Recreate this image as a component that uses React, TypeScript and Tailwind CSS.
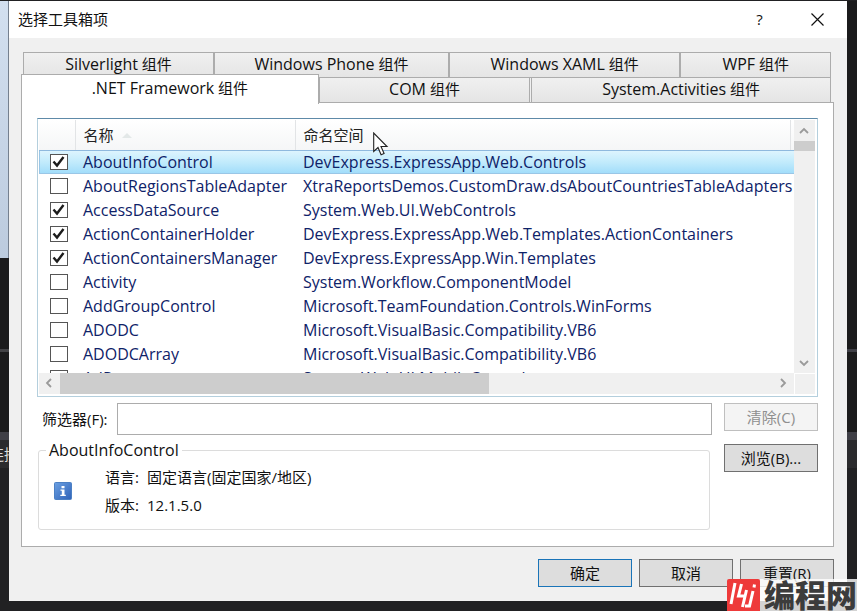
import React from "react";

const rows: [boolean, string, string][] = [
  [true, "AboutInfoControl", "DevExpress.ExpressApp.Web.Controls"],
  [false, "AboutRegionsTableAdapter", "XtraReportsDemos.CustomDraw.dsAboutCountriesTableAdapters"],
  [true, "AccessDataSource", "System.Web.UI.WebControls"],
  [true, "ActionContainerHolder", "DevExpress.ExpressApp.Web.Templates.ActionContainers"],
  [true, "ActionContainersManager", "DevExpress.ExpressApp.Win.Templates"],
  [false, "Activity", "System.Workflow.ComponentModel"],
  [false, "AddGroupControl", "Microsoft.TeamFoundation.Controls.WinForms"],
  [false, "ADODC", "Microsoft.VisualBasic.Compatibility.VB6"],
  [false, "ADODCArray", "Microsoft.VisualBasic.Compatibility.VB6"],
  [false, "AdRotator", "System.Web.UI.MobileControls"],
];

const tabBase =
  "border border-[#acacac] bg-linear-to-b from-[#f0f0f0] to-[#e5e5e5] pb-[2px] text-center leading-[22px] whitespace-nowrap";
const buttonBase = "w-[94px] shrink-0 border text-center leading-[26px]";

function TabLabel({ children }: { children: string }) {
  return (
    <>
      <span className="text-[16px]">{children}</span> 组件
    </>
  );
}

function Chevron({ d }: { d: string }) {
  return (
    <svg width="10" height="10" viewBox="0 0 10 10" fill="none" stroke="#9a9a9a" strokeWidth="1.8">
      <path d={d} />
    </svg>
  );
}

function Row({ checked, name, space, selected }: { checked: boolean; name: string; space: string; selected: boolean }) {
  return (
    <tr
      className={
        selected
          ? "h-6 bg-linear-to-b from-[#e0f5fe] via-[#c2ebfc] to-[#9fdcfa] shadow-[inset_0_1px_0_#8fb9de,inset_1px_0_0_#9ac6e6,inset_0_-1px_0_#9ac6e6]"
          : "h-6"
      }
    >
      <td className="p-0 pl-[11px]">
        <span className="relative block h-4 w-[18px]">
          <input
            type="checkbox"
            defaultChecked={checked}
            aria-label={name}
            className="peer block h-4 w-[18px] appearance-none border border-[#555] bg-white"
          />
          <svg
            className="pointer-events-none absolute inset-0 hidden peer-checked:block"
            width="18"
            height="16"
            viewBox="0 0 18 16"
            fill="none"
            stroke="#1c1c1c"
            strokeWidth="2.4"
          >
            <path d="M3.500 7.500 7 11.500 13.500 3" />
          </svg>
        </span>
      </td>
      <td className="p-0 pl-2">{name}</td>
      <td className="p-0 pl-2" colSpan={2}>{space}</td>
    </tr>
  );
}

export default function App() {
  return (
    <div className="relative flex min-h-screen bg-[#212123] pt-px font-['Open_Sans','Noto_Sans_CJK_SC',sans-serif] text-[15px] leading-6 text-[#111]">
      <aside className="flex w-[9px] shrink-0 flex-col overflow-hidden">
        <div className="h-[257px] border-r border-[#75808f] bg-linear-to-b from-[#d3e0f0] to-[#bccbde]" />
        <div className="h-[91px] bg-[#1b1b1c]" />
        <div className="h-[3px] bg-[#434346]" />
        <div className="h-20 bg-[#1b1b1c]" />
        <div className="h-2 bg-[#3f3f46]" />
        <div className="h-7 bg-[#2b2b2d] leading-7 text-[#ddd]">
          <span className="-ml-[11px] block whitespace-nowrap">连接</span>
        </div>
      </aside>

      <main className="mb-[10px] flex min-w-0 flex-1 flex-col bg-[#f0f0f0]">
        <header className="flex h-[37px] items-center bg-white pb-px pl-[9px]">
          <h1 className="flex-1">选择工具箱项</h1>
          <button className="w-[57px] text-center" aria-label="帮助">?</button>
          <button className="flex w-[59px] justify-center" aria-label="关闭">
            <svg width="13" height="13" viewBox="0 0 13 13" stroke="#111" strokeWidth="1.2">
              <path d="M.5.5l12 12M12.500.5l-12 12" />
            </svg>
          </button>
        </header>

        <div className="flex flex-1 flex-col pr-[13px] pl-3">
          <div role="tablist" className="mt-[14px]">
            <div className="flex pr-[3px] pl-[2px]">
              <button role="tab" className={`${tabBase} flex-[191]`}><TabLabel>Silverlight</TabLabel></button>
              <button role="tab" className={`${tabBase} flex-[235]`}><TabLabel>Windows Phone</TabLabel></button>
              <button role="tab" className={`${tabBase} flex-[232]`}><TabLabel>Windows XAML</TabLabel></button>
              <button role="tab" className={`${tabBase} flex-[150]`}><TabLabel>WPF</TabLabel></button>
            </div>
            <div className="-mt-px flex pr-[3px]">
              <button
                role="tab"
                aria-selected="true"
                className="relative -mt-[3px] -mb-px flex-[298] border border-b-0 border-[#acacac] bg-white pb-1 text-center leading-6"
              >
                <TabLabel>.NET Framework</TabLabel>
              </button>
              <button role="tab" className={`${tabBase} flex-[211]`}><TabLabel>COM</TabLabel></button>
              <button role="tab" className={`${tabBase} ml-px flex-[300]`}><TabLabel>System.Activities</TabLabel></button>
            </div>
          </div>

          <section className="-mt-px border border-[#acacac] bg-white px-[15px] pt-[15px] pb-4">
            <div className="grid grid-cols-[1fr_23px] grid-rows-[253px_23px] border border-[#b4cfdd] border-t-[#5e8aa8] pt-px pl-px">
              <div className="overflow-hidden">
                <table className="w-full table-fixed border-collapse whitespace-nowrap text-[#0e2268]">
                  <colgroup>
                    <col className="w-9" />
                    <col className="w-[220px]" />
                    <col />
                    <col className="w-1" />
                  </colgroup>
                  <thead>
                    <tr className="h-[30px] bg-linear-to-b from-white to-[#f5f6f7] text-left text-[#222]">
                      <th className="border-r border-[#e2e4e6] p-0" />
                      <th className="border-r border-[#e2e4e6] p-0 pl-2 font-normal">
                        <span className="flex items-center gap-2">
                          名称
                          <svg width="10" height="5" viewBox="0 0 10 5" fill="#e3e8e8">
                            <path d="M5 0l5 5H0z" />
                          </svg>
                        </span>
                      </th>
                      <th className="border-r border-[#e2e4e6] p-0 pl-2 font-normal">命名空间</th>
                      <th className="p-0" />
                    </tr>
                  </thead>
                  <tbody className="text-[16px] leading-6">
                    {rows.map(([checked, name, space], i) => (
                      <Row key={name} checked={checked} name={name} space={space} selected={i === 0} />
                    ))}
                  </tbody>
                </table>
              </div>
              <div className="mr-[2px] flex flex-col bg-[#f0f0f0]">
                <div className="flex h-[21px] items-center justify-center pr-px"><Chevron d="M1 7l4-4 4 4" /></div>
                <div className="h-[10px] bg-[#cdcdcd]" />
                <div className="flex-1" />
                <div className="flex h-[21px] items-center justify-center pr-px"><Chevron d="M1 3l4 4 4-4" /></div>
              </div>
              <div className="mb-[2px] flex bg-[#f0f0f0]">
                <div className="flex w-[21px] items-center justify-center pr-px pb-px"><Chevron d="M7 1L3 5l4 4" /></div>
                <div className="flex-[429] bg-[#cdcdcd]" />
                <div className="flex-[284]" />
                <div className="flex w-[21px] items-center justify-center pr-px pb-px"><Chevron d="M3 1l4 4-4 4" /></div>
              </div>
              <div className="mr-[2px] mb-[2px] border-t border-l border-white bg-[#f0f0f0]" />
            </div>

            <div className="mt-[6px] flex gap-3">
              <div className="min-w-0 flex-1">
                <div className="flex items-center">
                  <label htmlFor="filter" className="w-20 shrink-0 pl-[5px] whitespace-nowrap">筛选器(F):</label>
                  <input id="filter" className="h-8 min-w-0 flex-1 border border-[#acacac] bg-white px-2 outline-none" />
                </div>
                <fieldset className="mt-[3px] mr-[2px] ml-px h-[92px] rounded-[3px] border border-[#dcdcdc] px-[7px]">
                  <legend className="px-[3px] text-[16px] leading-6">AboutInfoControl</legend>
                  <div className="flex items-center pt-px pl-2">
                    <svg className="shrink-0" width="18" height="18" viewBox="0 0 18 18">
                      <defs>
                        <linearGradient id="info" x2="1" y2="1">
                          <stop stopColor="#6ba0e2" />
                          <stop offset="1" stopColor="#2f62b8" />
                        </linearGradient>
                      </defs>
                      <rect x=".5" y=".5" width="17" height="17" rx="1" fill="url(#info)" stroke="#4c80c4" />
                      <path fill="#fff" d="M7.500 4h3v2.200h-3zM6.500 7.500h4v5.200h1.300V14H6.300v-1.300h1.500V8.800H6.500z" />
                    </svg>
                    <dl className="ml-[33px] grid grid-cols-[42px_1fr] leading-7">
                      <dt>语言:</dt>
                      <dd>固定语言(固定国家/地区)</dd>
                      <dt>版本:</dt>
                      <dd>12.1.5.0</dd>
                    </dl>
                  </div>
                </fieldset>
              </div>
              <div className="flex flex-col gap-[13px]">
                <button disabled className={`${buttonBase} border-[#bfbfbf] bg-[#f4f4f4] text-[#8f8f8f]`}>清除(C)</button>
                <button className={`${buttonBase} border-[#707070] bg-[#dddddd]`}>浏览(B)...</button>
              </div>
            </div>
          </section>

          <footer className="mt-3 mb-[14px] flex justify-end gap-[7px]">
            <button className={`${buttonBase} border-[#1a74b8] bg-[#dddddd]`}>确定</button>
            <button className={`${buttonBase} border-[#707070] bg-[#dddddd]`}>取消</button>
            <button className={`${buttonBase} border-[#707070] bg-[#dddddd]`}>重置(R)</button>
          </footer>
        </div>
      </main>

      <aside className="flex w-[10px] shrink-0 flex-col bg-[#212123]">
        <div className="h-[348px] bg-[#1b1b1c]" />
        <div className="h-[3px] bg-[#3f3f46]" />
        <div className="h-20 bg-[#1b1b1c]" />
        <div className="h-2 bg-[#3f3f46]" />
        <div className="h-7 bg-[#2b2b2d]" />
      </aside>

      <svg className="absolute top-[132px] left-[373px]" width="16" height="25" viewBox="0 0 16 25">
        <path d="M.7 1v18.500l4.300-4 3.100 7.300 3-1.300-3.100-7h6z" fill="#fff" stroke="#222" strokeWidth="1.100" />
      </svg>

      <div className="absolute right-0 bottom-0 flex h-8 w-[130px] items-center overflow-hidden">
        <svg width="33" height="32" viewBox="0 0 33 32">
          <rect width="33" height="34" rx="2" fill="#ee3a3a" />
          <g fill="none" stroke="#fff" strokeWidth="3">
            <path d="M8 4 4 25M14.500 5 11.500 17h5.500M19.500 11l-4 17M26 12l-3.500 15h-4.500" />
            <path d="M27.500 5.500 27 8.500" />
          </g>
        </svg>
        <span className="flex h-8 flex-1 items-center justify-end bg-white/80 text-[31px] leading-8 font-black whitespace-nowrap text-[#3c3c3c]">
          编程网
        </span>
      </div>
    </div>
  );
}
